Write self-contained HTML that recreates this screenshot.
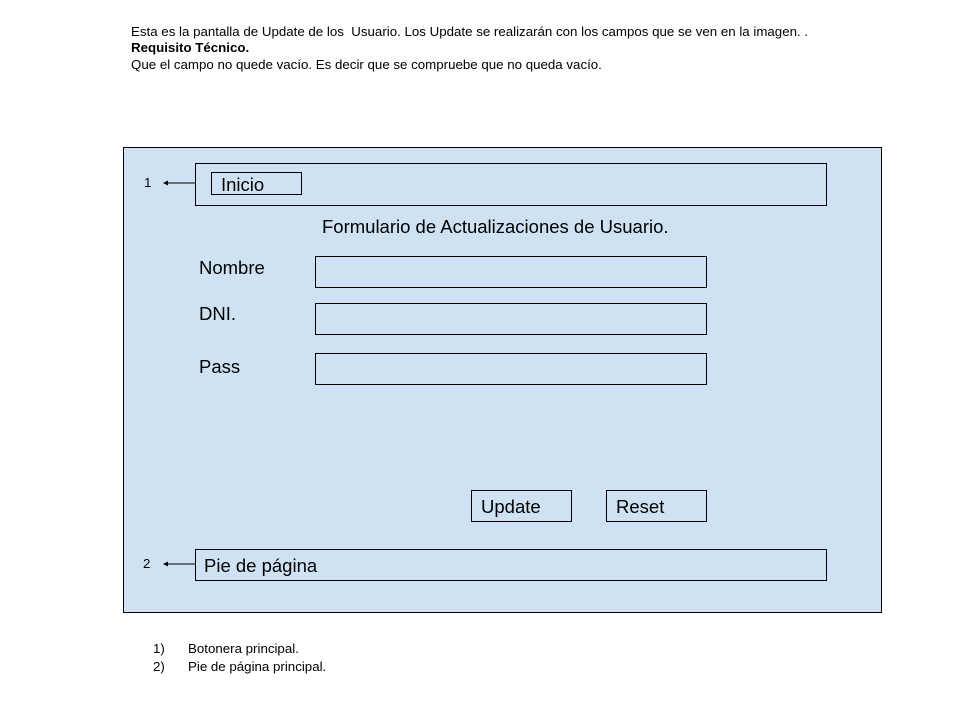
<!DOCTYPE html>
<html><head><meta charset="utf-8"><style>
body{margin:0;width:960px;height:720px;background:#fff;position:relative;font-family:"Liberation Sans",sans-serif;color:#000;overflow:hidden}
.a{position:absolute}
.b{position:absolute;border:1px solid #000;box-sizing:border-box}
.t{font-size:13.3px;white-space:nowrap}
.l{font-size:18.5px;white-space:nowrap}
</style></head><body>
<div class="a t" style="left:131px;top:24px">Esta es la pantalla de Update de los&nbsp; Usuario. Los Update se realizarán con los campos que se ven en la imagen. .</div>
<div class="a t" style="left:131px;top:40px;font-weight:bold">Requisito Técnico.</div>
<div class="a t" style="left:131px;top:57px">Que el campo no quede vacío. Es decir que se compruebe que no queda vacío.</div>

<div class="b" style="left:123px;top:147px;width:759px;height:466px;background:#cfe2f3"></div>
<div class="b" style="left:195px;top:163px;width:632px;height:43px"></div>
<div class="b" style="left:211px;top:172px;width:91px;height:23px"></div>
<div class="a l" style="left:221px;top:174px">Inicio</div>
<div class="a t" style="left:144px;top:175px">1</div>
<svg class="a" style="left:160px;top:178px" width="36" height="10"><line x1="6" y1="5" x2="36" y2="5" stroke="#000" stroke-width="1"/><polygon points="3,5 8,2.5 8,7.5" fill="#000"/></svg>

<div class="a l" style="left:322px;top:216px">Formulario de Actualizaciones de Usuario.</div>
<div class="a l" style="left:199px;top:257px">Nombre</div>
<div class="a l" style="left:199px;top:303px">DNI.</div>
<div class="a l" style="left:199px;top:356px">Pass</div>
<div class="b" style="left:315px;top:256px;width:392px;height:32px"></div>
<div class="b" style="left:315px;top:303px;width:392px;height:32px"></div>
<div class="b" style="left:315px;top:353px;width:392px;height:32px"></div>
<div class="b" style="left:471px;top:490px;width:101px;height:32px"></div>
<div class="a l" style="left:481px;top:496px">Update</div>
<div class="b" style="left:606px;top:490px;width:101px;height:32px"></div>
<div class="a l" style="left:616px;top:496px">Reset</div>

<div class="b" style="left:195px;top:549px;width:632px;height:32px"></div>
<div class="a l" style="left:204px;top:555px">Pie de página</div>
<div class="a t" style="left:143px;top:556px">2</div>
<svg class="a" style="left:160px;top:559px" width="36" height="10"><line x1="6" y1="5" x2="36" y2="5" stroke="#000" stroke-width="1"/><polygon points="3,5 8,2.5 8,7.5" fill="#000"/></svg>

<div class="a t" style="left:153px;top:641px">1)</div>
<div class="a t" style="left:188px;top:641px">Botonera principal.</div>
<div class="a t" style="left:153px;top:659px">2)</div>
<div class="a t" style="left:188px;top:659px">Pie de página principal.</div>
</body></html>
